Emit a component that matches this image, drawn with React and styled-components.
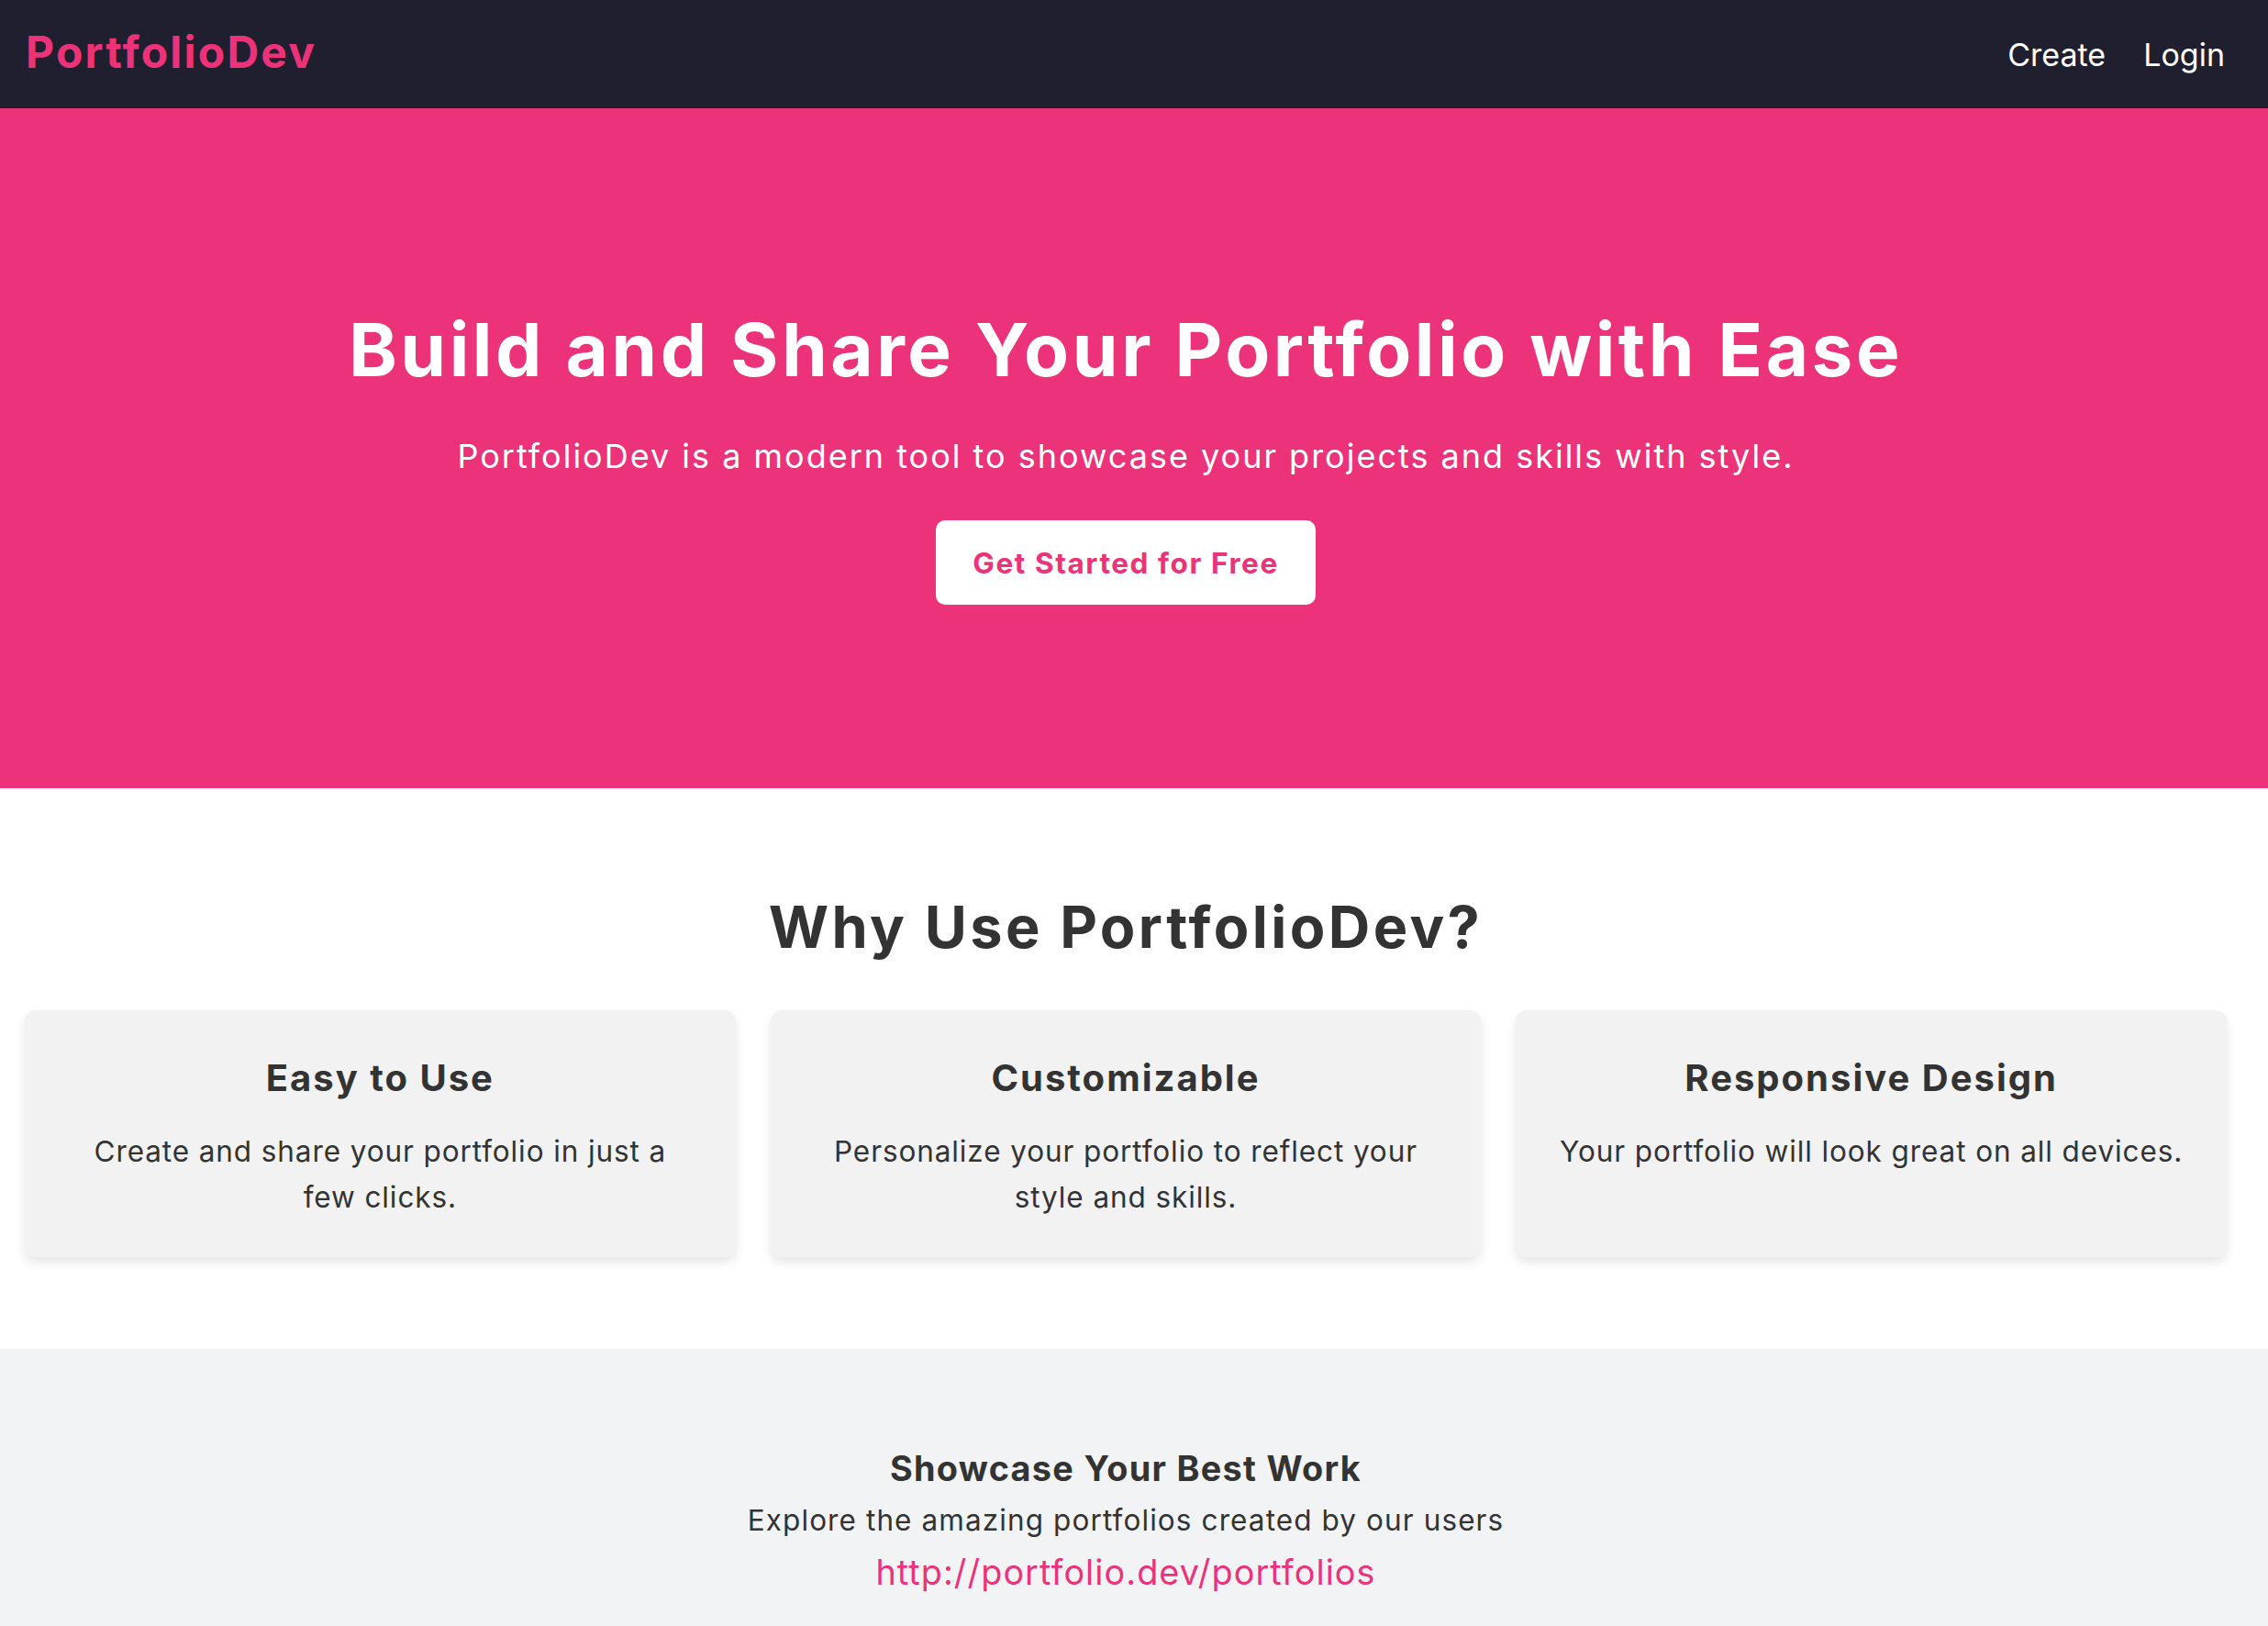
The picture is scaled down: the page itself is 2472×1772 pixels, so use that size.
import React from 'react';
import styled, { createGlobalStyle } from 'styled-components';

const pink = '#ec3379';
const dark = '#333333';

const GlobalStyle = createGlobalStyle`
  * {
    box-sizing: border-box;
  }
  body {
    margin: 0;
    font-family: Inter, 'Open Sans', sans-serif;
    color: ${dark};
    background: #ffffff;
  }
`;

const Nav = styled.nav`
  background-color: #1f1f2f;
  height: 118px;
  padding: 0 47px 0 28px;
  display: flex;
  justify-content: space-between;
  align-items: center;
`;

const Logo = styled.a`
  font-size: 48px;
  font-weight: 700;
  color: ${pink};
  text-decoration: none;
  letter-spacing: 2.2px;
  padding-bottom: 5px;
`;

const Menu = styled.div`
  display: flex;
  align-items: center;
  gap: 41px;
`;

const MenuItem = styled.a`
  font-size: 34px;
  color: #ffffff;
  text-decoration: none;
`;

const Hero = styled.header`
  background-color: ${pink};
  color: #ffffff;
  padding: 215px 18px 200px 0;
  display: flex;
  flex-direction: column;
  align-items: center;
  text-align: center;
`;

const HeroTitle = styled.h1`
  margin: 0;
  font-size: 80px;
  line-height: 96px;
  font-weight: 700;
  letter-spacing: 3.5px;
`;

const HeroText = styled.p`
  margin: 47px 0 0;
  font-size: 36px;
  line-height: 43px;
  letter-spacing: 2px;
`;

const CtaButton = styled.a`
  margin-top: 48px;
  height: 92px;
  padding: 0 40px;
  display: inline-flex;
  align-items: center;
  background: #ffffff;
  color: ${pink};
  border-radius: 10px;
  font-size: 31.5px;
  font-weight: 700;
  letter-spacing: 1.6px;
  text-decoration: none;
`;

const Features = styled.section`
  padding: 113px 45px 100px 27px;
`;

const SectionTitle = styled.h2`
  margin: 0 0 53px;
  text-align: center;
  font-size: 63px;
  line-height: 76px;
  font-weight: 700;
  letter-spacing: 3.4px;
  color: ${dark};
`;

const CardGrid = styled.div`
  display: grid;
  grid-template-columns: repeat(3, 1fr);
  gap: 38px;
`;

const Card = styled.div`
  background: #f2f2f2;
  border-radius: 12px;
  box-shadow: 0 6px 12px rgba(0, 0, 0, 0.1);
  padding: 50px 44px 40px;
  text-align: center;
`;

const CardTitle = styled.h3`
  margin: 0 0 31px;
  font-size: 40px;
  line-height: 48px;
  font-weight: 700;
  letter-spacing: 2px;
`;

const CardText = styled.p`
  margin: 0;
  font-size: 31.5px;
  line-height: 50px;
  letter-spacing: 0.9px;
`;

const Showcase = styled.section`
  background: #f2f3f5;
  padding: 107px 18px 80px 0;
  text-align: center;
`;

const ShowcaseTitle = styled.h4`
  margin: 0 0 15px;
  font-size: 37.8px;
  line-height: 46px;
  font-weight: 700;
  letter-spacing: 1.3px;
`;

const ShowcaseText = styled.p`
  margin: 0 0 14px;
  font-size: 31.5px;
  line-height: 38px;
  letter-spacing: 1.1px;
`;

const ShowcaseLink = styled.a`
  font-size: 37.8px;
  line-height: 46px;
  letter-spacing: 1.05px;
  color: ${pink};
  text-decoration: none;
`;

const features = [
  { title: 'Easy to Use', text: 'Create and share your portfolio in just a few clicks.' },
  { title: 'Customizable', text: 'Personalize your portfolio to reflect your style and skills.' },
  { title: 'Responsive Design', text: 'Your portfolio will look great on all devices.' },
];

export default function App() {
  return (
    <>
      <GlobalStyle />
      <Nav>
        <Logo href="#">PortfolioDev</Logo>
        <Menu>
          <MenuItem href="#">Create</MenuItem>
          <MenuItem href="#">Login</MenuItem>
        </Menu>
      </Nav>
      <Hero>
        <HeroTitle>Build and Share Your Portfolio with Ease</HeroTitle>
        <HeroText>PortfolioDev is a modern tool to showcase your projects and skills with style.</HeroText>
        <CtaButton href="#">Get Started for Free</CtaButton>
      </Hero>
      <Features>
        <SectionTitle>Why Use PortfolioDev?</SectionTitle>
        <CardGrid>
          {features.map((f) => (
            <Card key={f.title}>
              <CardTitle>{f.title}</CardTitle>
              <CardText>{f.text}</CardText>
            </Card>
          ))}
        </CardGrid>
      </Features>
      <Showcase>
        <ShowcaseTitle>Showcase Your Best Work</ShowcaseTitle>
        <ShowcaseText>Explore the amazing portfolios created by our users</ShowcaseText>
        <ShowcaseLink href="#">http://portfolio.dev/portfolios</ShowcaseLink>
      </Showcase>
    </>
  );
}
